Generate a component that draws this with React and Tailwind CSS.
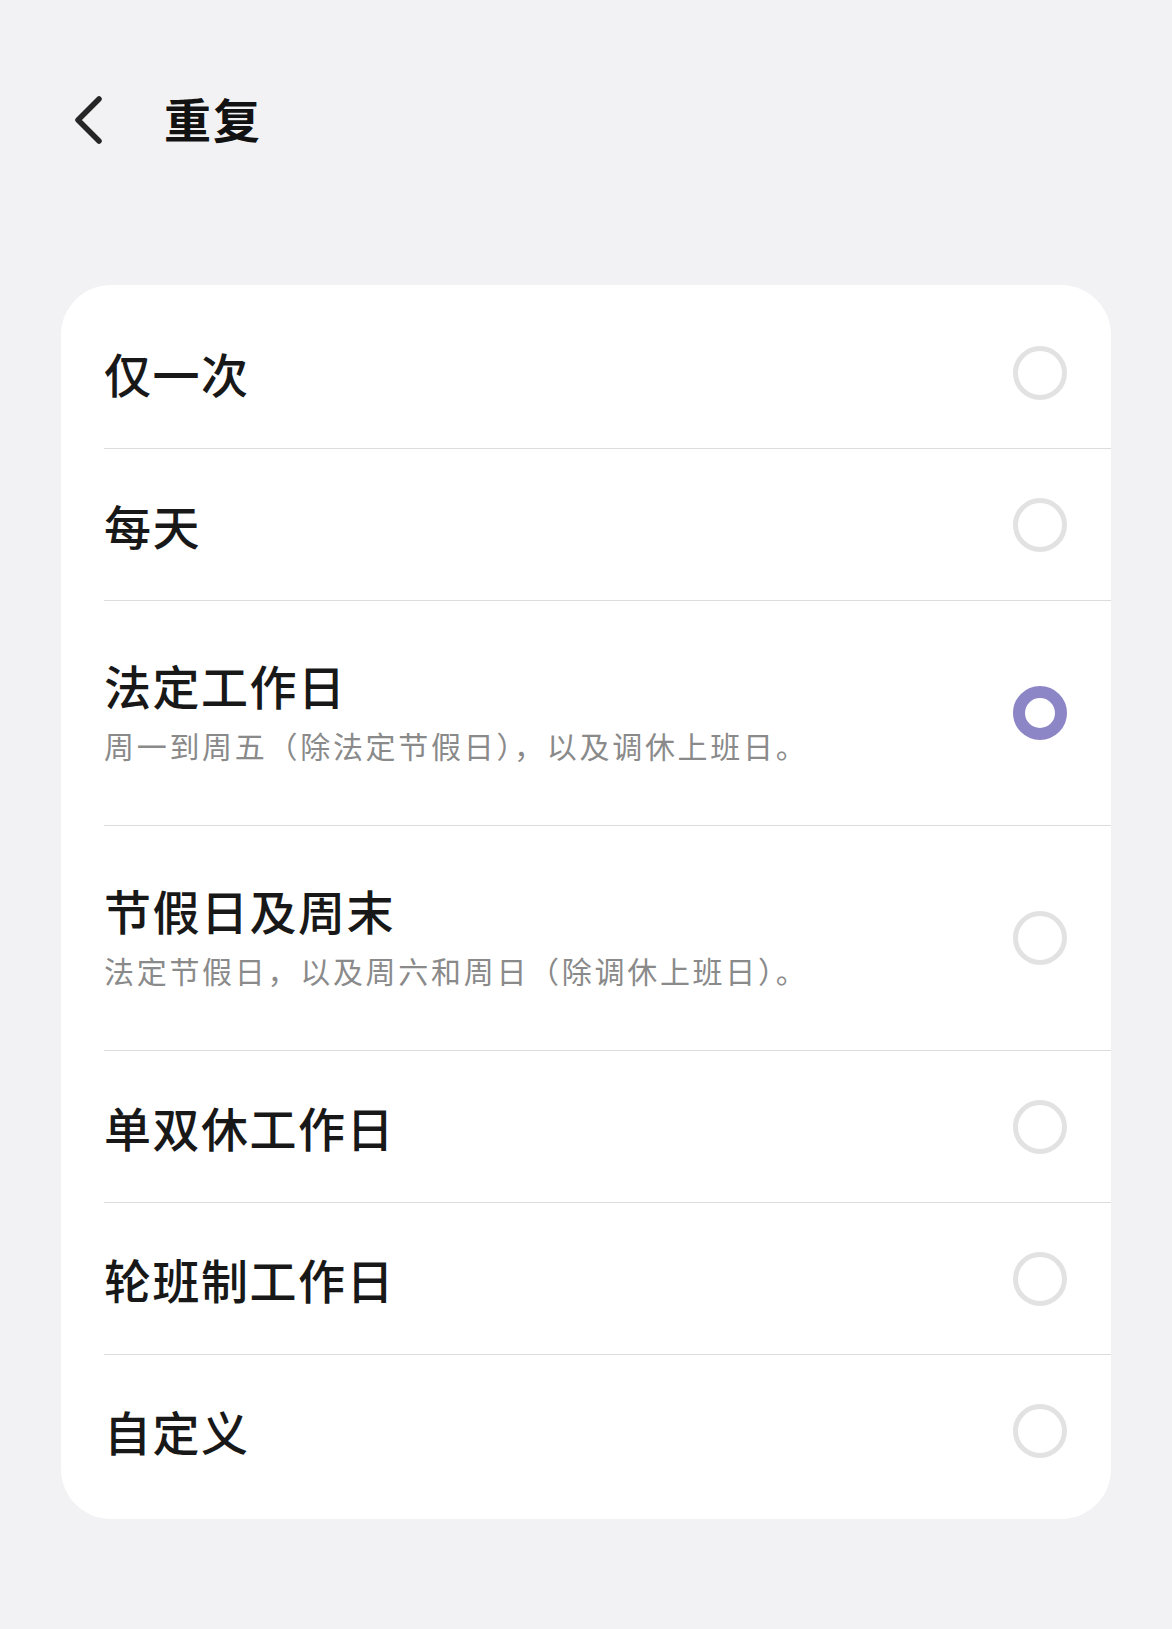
import React from "react";

const items = [
  { title: "仅一次" },
  { title: "每天" },
  { title: "法定工作日", sub: "周一到周五（除法定节假日），以及调休上班日。", selected: true },
  { title: "节假日及周末", sub: "法定节假日，以及周六和周日（除调休上班日）。" },
  { title: "单双休工作日" },
  { title: "轮班制工作日" },
  { title: "自定义" },
];

function Radio({ selected }) {
  return selected ? (
    <div className="w-[54px] h-[54px] rounded-full border-[12px] border-[#8c86c6] bg-white shrink-0" />
  ) : (
    <div className="w-[54px] h-[54px] rounded-full border-[5px] border-[#e2e2e2] bg-white shrink-0" />
  );
}

export default function App() {
  return (
    <div
      className="w-[1172px] h-[1629px] bg-[#f2f2f4] overflow-hidden"
      style={{ fontFamily: '"Noto Sans CJK SC", "Noto Sans", sans-serif' }}
    >
      <div className="pt-[72px] h-[168px] flex items-center">
        <div className="h-[96px] flex items-center">
          <svg width="40" height="60" viewBox="0 0 40 60" className="ml-[68px]">
            <polyline
              points="31,9 10,30 31,51"
              fill="none"
              stroke="#262626"
              strokeWidth="5.5"
              strokeLinecap="round"
              strokeLinejoin="round"
            />
          </svg>
          <div className="ml-[56px] mb-[6px] text-[47px] font-bold text-[#121212] leading-none tracking-[2px]">
            重复
          </div>
        </div>
      </div>

      <div className="mx-[61px] mt-[117px] bg-white rounded-[50px] py-[12px]">
        {items.map((it, i) => (
          <div key={i} className="pl-[43px]">
            <div
              className={
                "flex items-center pr-[44px] " +
                (i < items.length - 1 ? "border-b-[1.5px] border-[#dcdcdc] " : "") +
                (it.sub ? "h-[225px]" : "h-[152px]")
              }
            >
              <div className={"flex-1 min-w-0 " + (it.sub ? "pb-[7px]" : "")}>
                <div className="text-[47px] font-medium text-[#181818] leading-[60px] tracking-[1.5px]">
                  {it.title}
                </div>
                {it.sub && (
                  <div className="mt-[10px] text-[30px] text-[#8a8a8a] leading-[40px] tracking-[2.7px]">
                    {it.sub}
                  </div>
                )}
              </div>
              <Radio selected={it.selected} />
            </div>
          </div>
        ))}
      </div>
    </div>
  );
}
